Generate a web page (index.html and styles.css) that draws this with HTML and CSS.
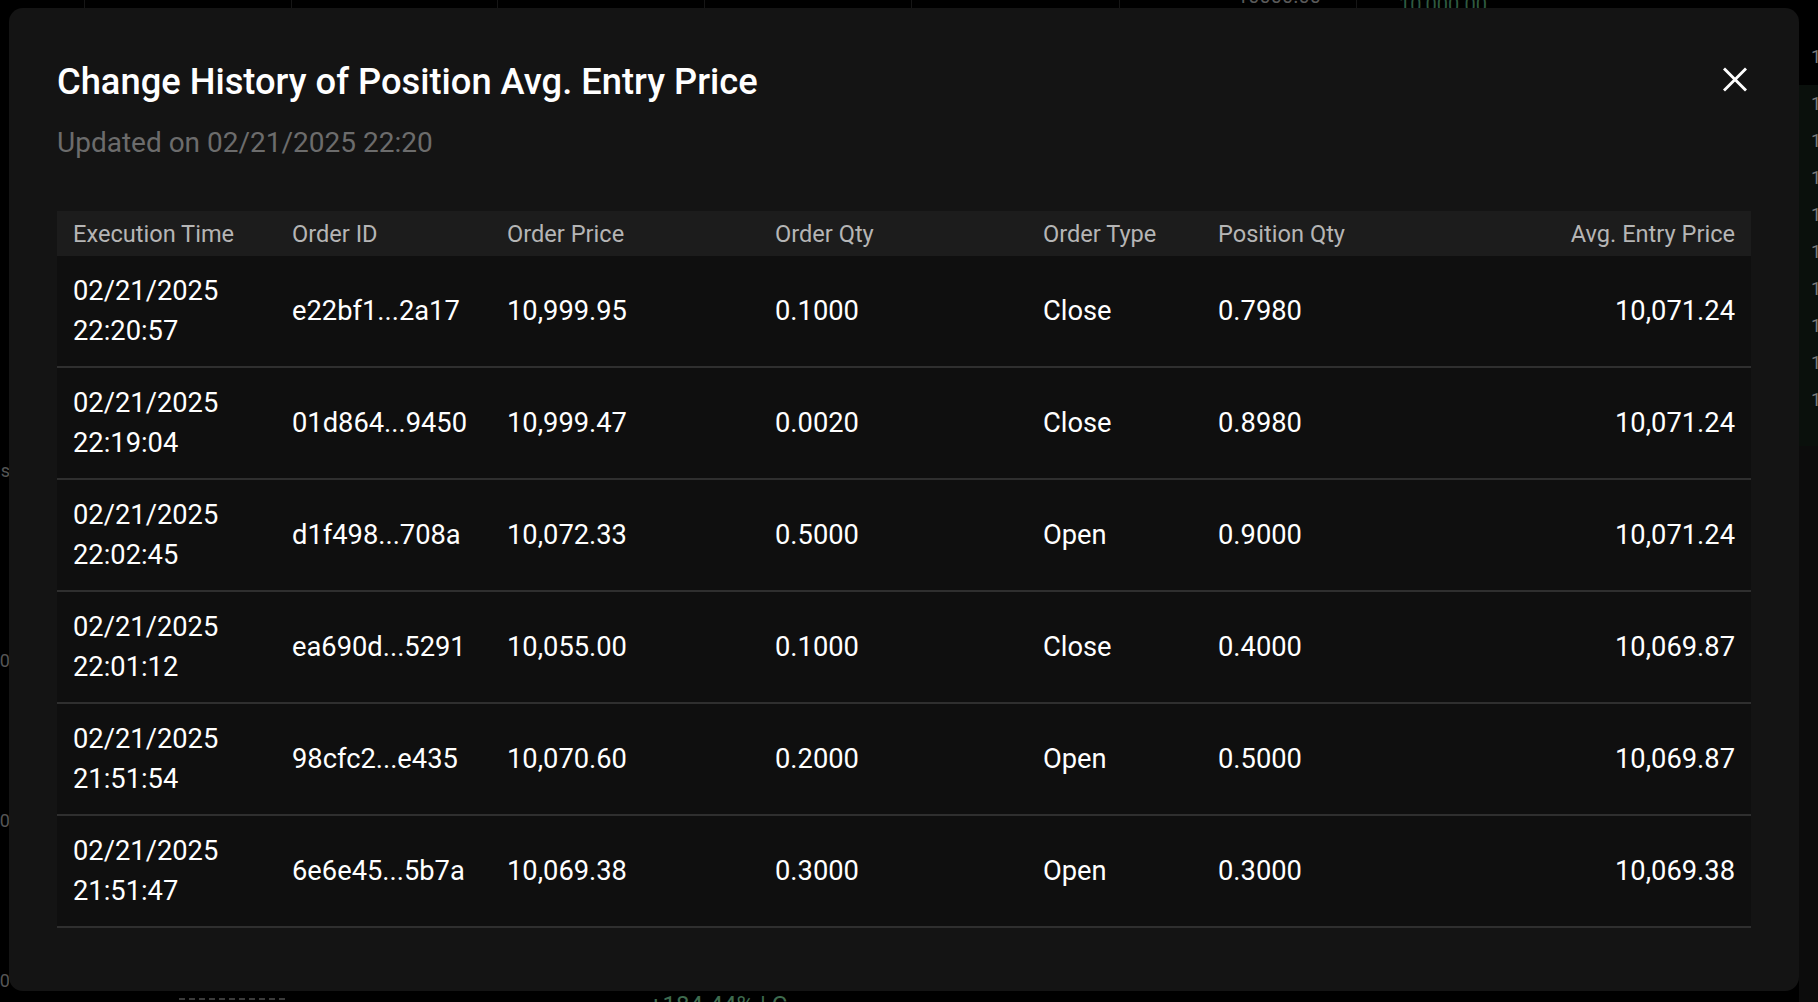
FILE: index.html
```html
<!DOCTYPE html>
<html lang="en">
<head>
<meta charset="utf-8">
<title>Change History of Position Avg. Entry Price</title>
<link rel="stylesheet" href="styles.css">
</head>
<body>
<div class="page">
  <div class="backdrop">
    <div class="bg-top">
      <div class="bg-cell c1"></div><div class="bg-cell c2"></div><div class="bg-cell c3"></div><div class="bg-cell c4"></div><div class="bg-cell c5"></div><div class="bg-cell c6"></div><div class="bg-cell c7"><span class="bg-num">10000.00</span></div><div class="bg-cell c8"><span class="bg-num green">10,000.00</span></div>
    </div>
    <div class="bg-middle">
      <div class="bg-left">
        <span class="bg-l s1">Avails</span>
        <span class="bg-l s2">100</span>
        <span class="bg-l s3">100</span>
        <span class="bg-l s4">100</span>
      </div>
      <div class="bg-main"></div>
      <div class="bg-book">
        <div class="book-top"><span>10,071.24</span></div>
        <div class="book-green">
          <span>10,071.24</span><span>10,071.24</span><span>10,071.24</span><span>10,071.24</span><span>10,071.24</span><span>10,071.24</span><span>10,071.24</span><span>10,071.24</span><span>10,071.24</span>
        </div>
        <div class="book-rest"></div>
      </div>
    </div>
    <div class="bg-bottom">
      <span class="dash"></span>
      <span class="pct">+184.44% | C</span>
    </div>
  </div>

  <div class="modal" role="dialog" aria-labelledby="mtitle">
    <div class="modal-head">
      <h1 class="title" id="mtitle">Change History of Position Avg. Entry Price</h1>
      <button class="close" aria-label="Close">
        <svg width="24" height="25" viewBox="0 0 24 25" fill="none" stroke="#ffffff" stroke-width="3" stroke-linecap="square">
          <path d="M2 2.5 L22 22.5 M22 2.5 L2 22.5"/>
        </svg>
      </button>
    </div>
    <div class="sub">Updated on 02/21/2025 22:20</div>

    <div class="table">
      <div class="tr th">
        <div class="td">Execution Time</div>
        <div class="td">Order ID</div>
        <div class="td">Order Price</div>
        <div class="td">Order Qty</div>
        <div class="td">Order Type</div>
        <div class="td">Position Qty</div>
        <div class="td right">Avg. Entry Price</div>
      </div>
      <div class="tr">
        <div class="td">02/21/2025<br>22:20:57</div>
        <div class="td">e22bf1...2a17</div>
        <div class="td">10,999.95</div>
        <div class="td">0.1000</div>
        <div class="td">Close</div>
        <div class="td">0.7980</div>
        <div class="td right">10,071.24</div>
      </div>
      <div class="tr">
        <div class="td">02/21/2025<br>22:19:04</div>
        <div class="td">01d864...9450</div>
        <div class="td">10,999.47</div>
        <div class="td">0.0020</div>
        <div class="td">Close</div>
        <div class="td">0.8980</div>
        <div class="td right">10,071.24</div>
      </div>
      <div class="tr">
        <div class="td">02/21/2025<br>22:02:45</div>
        <div class="td">d1f498...708a</div>
        <div class="td">10,072.33</div>
        <div class="td">0.5000</div>
        <div class="td">Open</div>
        <div class="td">0.9000</div>
        <div class="td right">10,071.24</div>
      </div>
      <div class="tr">
        <div class="td">02/21/2025<br>22:01:12</div>
        <div class="td">ea690d...5291</div>
        <div class="td">10,055.00</div>
        <div class="td">0.1000</div>
        <div class="td">Close</div>
        <div class="td">0.4000</div>
        <div class="td right">10,069.87</div>
      </div>
      <div class="tr">
        <div class="td">02/21/2025<br>21:51:54</div>
        <div class="td">98cfc2...e435</div>
        <div class="td">10,070.60</div>
        <div class="td">0.2000</div>
        <div class="td">Open</div>
        <div class="td">0.5000</div>
        <div class="td right">10,069.87</div>
      </div>
      <div class="tr">
        <div class="td">02/21/2025<br>21:51:47</div>
        <div class="td">6e6e45...5b7a</div>
        <div class="td">10,069.38</div>
        <div class="td">0.3000</div>
        <div class="td">Open</div>
        <div class="td">0.3000</div>
        <div class="td right">10,069.38</div>
      </div>
    </div>
  </div>
</div>
</body>
</html>
```
FILE: styles.css
```css
* { box-sizing: border-box; }
html, body {
  margin: 0;
  padding: 0;
  background: #000;
}
body {
  font-family: Roboto, "Liberation Sans", Arial, sans-serif;
  color: #fff;
}
.page {
  position: relative;
  width: 1818px;
  height: 1002px;
  overflow: hidden;
  background: #000;
}

/* ---------- backdrop (page behind the dialog) ---------- */
.backdrop {
  display: flex;
  flex-direction: column;
  height: 100%;
}
.bg-top {
  display: flex;
  height: 85px;
  flex: none;
}
.bg-cell {
  border-right: 1px solid #161616;
  display: flex;
  justify-content: flex-end;
  align-items: flex-start;
  padding-right: 35px;
}
.c1 { width: 85px; }
.c2 { width: 207px; }
.c3 { width: 206px; }
.c4 { width: 207px; }
.c5 { width: 207px; }
.c6 { width: 208px; }
.c7 { width: 237px; }
.c8 { flex: 1; border-right: 0; justify-content: flex-start; padding-left: 42px; }
.bg-num {
  font-size: 20px;
  line-height: 20px;
  margin-top: -14px;
  color: #5a5a5a;
}
.bg-num.green { color: #2f5a40; margin-top: -5px; }

.bg-middle {
  flex: 1;
  display: flex;
  margin-top: -85px;
}
.bg-left {
  width: 9px;
  display: flex;
  flex-direction: column;
  align-items: flex-end;
  overflow: hidden;
  padding-top: 461px;
}
.bg-l {
  font-size: 18px;
  line-height: 20px;
  color: #555;
  white-space: nowrap;
  margin-right: -1px;
}
.s2 { margin-top: 170px; }
.s3 { margin-top: 140px; }
.s4 { margin-top: 140px; }
.bg-main { flex: 1; }
.bg-book {
  width: 19px;
  display: flex;
  flex-direction: column;
  overflow: hidden;
}
.book-top {
  height: 85px;
  padding: 38px 0 0 12px;
}
.book-green {
  height: 361px;
  background: #0a100c;
  display: flex;
  flex-direction: column;
  padding: 0 0 0 12px;
}
.book-top span,
.book-green span {
  font-size: 18px;
  line-height: 37px;
  color: #7a7a7a;
  white-space: nowrap;
}
.book-rest { flex: 1; background: #0c0c0c; }

.bg-bottom {
  height: 10px;
  flex: none;
  display: flex;
  align-items: flex-start;
  margin-top: -10px;
}
.dash {
  width: 106px;
  margin-left: 179px;
  margin-top: 6px;
  border-top: 2px dashed #3a3a3a;
}
.pct {
  margin-left: 364px;
  margin-top: 1px;
  font-size: 24px;
  line-height: 24px;
  color: #3e6b4f;
}

/* ---------- dialog ---------- */
.modal {
  position: absolute;
  top: 8px;
  left: 9px;
  width: 1790px;
  background: #141414;
  border-radius: 14px;
  padding: 53px 48px 63px 48px;
}
.modal-head {
  display: flex;
  justify-content: space-between;
  align-items: flex-start;
}
.title {
  margin: 0;
  font-size: 36.3px;
  line-height: 42px;
  font-weight: 500;
  color: #ffffff;
}
.close {
  margin: 6px 4px 0 0;
  padding: 0;
  border: 0;
  background: none;
  width: 24px;
  height: 25px;
  display: block;
  cursor: pointer;
}
.close svg { display: block; }
.sub {
  margin-top: 22px;
  font-size: 28px;
  line-height: 36px;
  color: #6c6c6c;
}

.table {
  margin-top: 50px;
}
.tr {
  display: grid;
  grid-template-columns: 219px 215px 268px 268px 175px 1fr auto;
  height: 112px;
  background: #0f0f0f;
  border-bottom: 2px solid #2f2f2f;
}
.td {
  padding: 0 16px;
  display: flex;
  flex-direction: column;
  justify-content: center;
  font-size: 27.3px;
  line-height: 40px;
  color: #ffffff;
  white-space: nowrap;
}
.td.right { align-items: flex-end; text-align: right; }
.th {
  height: 45px;
  background: #1c1c1c;
  border-bottom: 0;
}
.th .td {
  justify-content: flex-start;
  padding-top: 10px;
  font-size: 23.6px;
  line-height: 27px;
  color: #b5b5b5;
}
```
